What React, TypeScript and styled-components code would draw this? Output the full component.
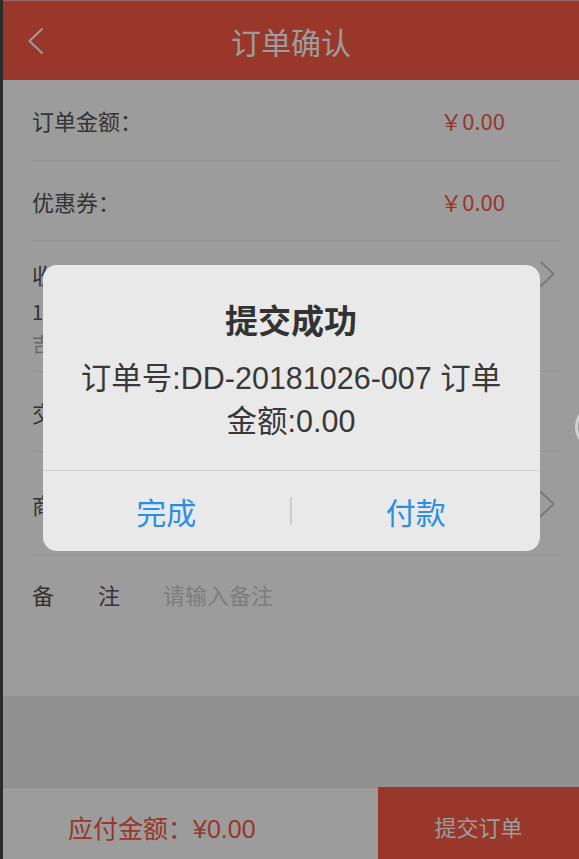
import React from "react";
import styled, { createGlobalStyle } from "styled-components";

const GlobalStyle = createGlobalStyle`
  html, body { margin: 0; padding: 0; height: 100%; }
  body {
    background: #2b2b2b;
    font-family: "Noto Sans CJK SC", "Noto Sans", sans-serif;
    overflow: hidden;
  }
  #root { height: 100%; }
  * { box-sizing: border-box; }
`;

const RED = "#f85a45";
const MIXED_FONT = `"Liberation Sans", "Noto Sans CJK SC", sans-serif`;

const Shell = styled.div`
  display: flex;
  height: 100vh;
`;

const Edge = styled.div`
  width: 3px;
  flex: none;
  background: #2b2b2b;
`;

const Page = styled.div`
  position: relative;
  flex: 1;
  display: flex;
  flex-direction: column;
  background: #eeeeee;
  overflow: hidden;
`;

const Header = styled.header`
  height: 80px;
  flex: none;
  background: ${RED};
  border-top: 1px solid #f3a9a0;
  display: grid;
  grid-template-columns: 80px 1fr 80px;
  align-items: center;
`;

const BackButton = styled.div`
  padding-left: 25px;
  display: flex;
  align-items: center;
`;

const Title = styled.h1`
  margin: 0;
  text-align: center;
  color: #ffffff;
  font-size: 30px;
  font-weight: 400;
  line-height: 40px;
`;

const List = styled.div`
  height: 616px;
  flex: none;
  background: #ffffff;
  display: flex;
  flex-direction: column;
`;

const Row = styled.div<{ $h: number }>`
  height: ${(p) => p.$h}px;
  flex: none;
  margin: 0 18px 0 28px;
  border-bottom: 1px solid #ebebeb;
  display: flex;
  align-items: center;
`;

const AddressRow = styled.div`
  height: 131px;
  flex: none;
  margin: 0 18px 0 28px;
  border-bottom: 1px solid #ebebeb;
  display: flex;
  align-items: flex-start;
  padding-top: 18px;
`;

const Label = styled.span`
  padding-left: 1px;
  font-size: 22px;
  line-height: 30px;
  color: #555555;
  white-space: nowrap;
`;

const Value = styled.span`
  margin-left: auto;
  margin-right: 56px;
  font-size: 22px;
  line-height: 30px;
  color: ${RED};
`;

const AddressBlock = styled.div`
  flex: 1;
  display: flex;
  flex-direction: column;
`;

const AddressLine = styled.span<{ $muted?: boolean; $lh: number; $mt?: number }>`
  padding-left: 1px;
  margin-top: ${(p) => p.$mt ?? 0}px;
  font-size: 20px;
  line-height: ${(p) => p.$lh}px;
  color: ${(p) => (p.$muted ? "#aaaaaa" : "#555555")};
  white-space: nowrap;
`;

const ChevronBox = styled.div<{ $top?: number }>`
  margin-left: auto;
  margin-right: 6px;
  margin-top: ${(p) => p.$top ?? 0}px;
  display: flex;
`;

const RemarkRow = styled.div`
  flex: 1;
  margin: 0 18px 0 28px;
  padding-top: 23px;
  display: flex;
  align-items: flex-start;
`;

const RemarkInput = styled.span`
  margin-left: 43px;
  font-size: 22px;
  line-height: 30px;
  color: #cccccc;
`;

const Spacer = styled.div`
  flex: 1;
  background: #eeeeee;
`;

const BottomBar = styled.footer`
  height: 72px;
  flex: none;
  display: flex;
`;

const Total = styled.div`
  flex: 1;
  background: #ffffff;
  border-top: 1px solid #e2e2e2;
  padding: 6px 0 0 65px;
  display: flex;
  align-items: center;
  font-family: ${MIXED_FONT};
  font-size: 25px;
  color: ${RED};
`;

const SubmitButton = styled.div`
  width: 201px;
  flex: none;
  background: ${RED};
  color: #ffffff;
  font-size: 22px;
  padding-top: 6px;
  display: flex;
  align-items: center;
  justify-content: center;
`;

const Overlay = styled.div`
  position: absolute;
  inset: 0;
  background: rgba(0, 0, 0, 0.39);
  display: flex;
  justify-content: center;
  align-items: flex-start;
  padding-top: 265px;
`;

const Dialog = styled.div`
  width: 497px;
  height: 286px;
  border-radius: 14px;
  background: #e9e9e9;
  display: flex;
  flex-direction: column;
  overflow: hidden;
`;

const DialogBody = styled.div`
  flex: 1;
  padding: 30px 20px 0;
  text-align: center;
`;

const DialogTitle = styled.div`
  font-size: 33px;
  font-weight: 700;
  line-height: 48px;
  color: #333333;
`;

const DialogMessage = styled.div`
  margin-top: 14px;
  font-family: ${MIXED_FONT};
  font-size: 30.5px;
  line-height: 43px;
  color: #383838;
  white-space: nowrap;
`;

const DialogActions = styled.div`
  height: 81px;
  flex: none;
  border-top: 1px solid #d3d3d3;
  display: grid;
  grid-template-columns: 1fr auto 1fr;
  align-items: center;
`;

const ActionButton = styled.button`
  border: none;
  background: none;
  padding: 0;
  font-family: inherit;
  font-size: 30px;
  line-height: 40px;
  color: #2b8fe0;
  text-align: center;
`;

const ActionDivider = styled.div`
  width: 2px;
  height: 28px;
  background: #cdcdcd;
`;

const FloatingRing = styled.div`
  position: absolute;
  left: 572px;
  top: 403px;
  width: 48px;
  height: 48px;
  border-radius: 50%;
  border: 3px solid #d0d0d0;
`;

const Chevron = ({ color, dir }: { color: string; dir: "left" | "right" }) => (
  <svg width="15" height="26" viewBox="0 0 15 26" fill="none">
    <polyline
      points={dir === "left" ? "14,1 1.5,13 14,25" : "1,1 13.5,13 1,25"}
      stroke={color}
      strokeWidth="2"
      strokeLinecap="round"
      strokeLinejoin="round"
    />
  </svg>
);

export default function App() {
  return (
    <>
      <GlobalStyle />
      <Shell>
        <Edge />
        <Page>
          <Header>
            <BackButton>
              <Chevron color="#ffffff" dir="left" />
            </BackButton>
            <Title>订单确认</Title>
            <div />
          </Header>
          <List>
            <Row $h={81}>
              <Label>订单金额：</Label>
              <Value>￥0.00</Value>
            </Row>
            <Row $h={80}>
              <Label>优惠券：</Label>
              <Value>￥0.00</Value>
            </Row>
            <AddressRow>
              <AddressBlock>
                <Label>收货信息</Label>
                <AddressLine $lh={38} $mt={4}>
                  13800000000 张先生
                </AddressLine>
                <AddressLine $lh={26} $muted>
                  吉林省长春市朝阳区人民大街
                </AddressLine>
              </AddressBlock>
              <ChevronBox $top={2}>
                <Chevron color="#c7c7c7" dir="right" />
              </ChevronBox>
            </AddressRow>
            <Row $h={80}>
              <Label>交货方式</Label>
            </Row>
            <Row $h={104}>
              <Label>商品清单</Label>
              <ChevronBox>
                <Chevron color="#c7c7c7" dir="right" />
              </ChevronBox>
            </Row>
            <RemarkRow>
              <Label>备　　注</Label>
              <RemarkInput>请输入备注</RemarkInput>
            </RemarkRow>
          </List>
          <Spacer />
          <BottomBar>
            <Total>应付金额：¥0.00</Total>
            <SubmitButton>提交订单</SubmitButton>
          </BottomBar>
          <Overlay>
            <Dialog>
              <DialogBody>
                <DialogTitle>提交成功</DialogTitle>
                <DialogMessage>
                  订单号:DD-20181026-007 订单
                  <br />
                  金额:0.00
                </DialogMessage>
              </DialogBody>
              <DialogActions>
                <ActionButton>完成</ActionButton>
                <ActionDivider />
                <ActionButton>付款</ActionButton>
              </DialogActions>
            </Dialog>
          </Overlay>
          <FloatingRing />
        </Page>
      </Shell>
    </>
  );
}
